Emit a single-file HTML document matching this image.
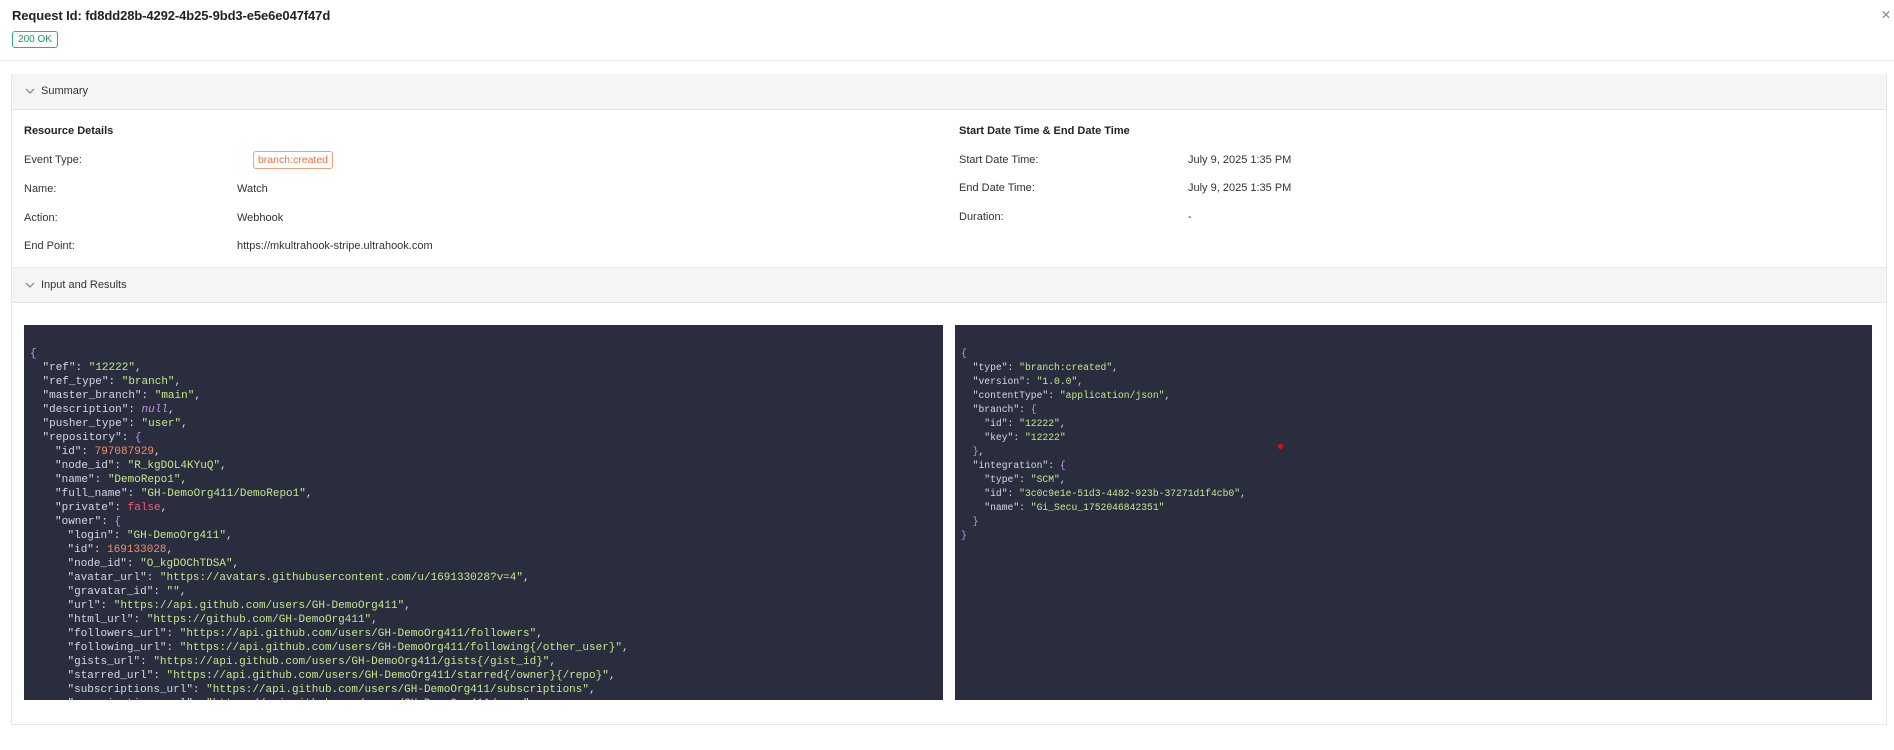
<!DOCTYPE html>
<html><head><meta charset="utf-8"><style>
*{box-sizing:border-box;margin:0;padding:0}
body{width:1894px;height:750px;background:#fff;font-family:"Liberation Sans",sans-serif;color:#222;position:relative;overflow:hidden;font-size:11px}
.abs{position:absolute;white-space:nowrap}
.title{left:12px;top:8px;font-size:13px;color:#222;font-weight:600;letter-spacing:-0.1px}
.ok{left:12px;top:31px;width:46px;height:17px;border:1px solid #2db37a;border-radius:3px;color:#1a9a62;font-size:10px;line-height:15px;text-align:center}
.hr{left:0;top:60px;width:1894px;height:1px;background:#e8e8e8}
.x{left:1881px;top:8px;font-size:12px;color:#888}
.box{left:11px;top:74px;width:1876px;height:651px;border:1px solid #e6e6e6}
.hd{left:12px;width:1874px;height:36px;background:#f5f5f5;border-bottom:1px solid #e3e3e3}
.hd span{position:absolute;left:29px;top:11px;font-size:11px;color:#333}
.hd svg{position:absolute;left:13px;top:14px}
.h{font-weight:bold;color:#222}
.lbl{color:#333}
.badge{left:253px;top:151px;width:80px;height:18px;border:1px solid #f0a07a;border-radius:3px;color:#e8703f;text-align:center;line-height:16px;font-size:10.5px}
.code{background:#292d3e;top:325px;height:375px;overflow:hidden}
.code pre{font-family:"Liberation Mono",monospace;font-size:9.7px;line-height:14px;color:#d5d8e4;padding:22px 0 0 6px}
.lc{font-family:"Liberation Mono",monospace;font-size:11px;line-height:14px;color:#d5d8e4;padding:22px 0 0 6px}
.lc div{height:14px;white-space:pre}
.l1{padding-left:12.5px}.l2{padding-left:25px}.l3{padding-left:37.5px}
.s{color:#c3e88d}.n{color:#f78c6c}.f{color:#ff5370}.b{color:#c792ea}.i{color:#c792ea;font-style:italic}.k{color:#d5d8e4}
</style></head><body>
<div class="abs title">Request Id: fd8dd28b-4292-4b25-9bd3-e5e6e047f47d</div>
<div class="abs ok">200 OK</div>
<div class="abs x">✕</div>
<div class="abs hr"></div>
<div class="abs box"></div>
<div class="abs hd" style="top:74px"><svg width="10" height="6" viewBox="0 0 10 6"><path d="M1 1l4 4 4-4" fill="none" stroke="#777" stroke-width="1.1"/></svg><span>Summary</span></div>

<div class="abs h" style="left:24px;top:125px">Resource Details</div>
<div class="abs lbl" style="left:24px;top:154px">Event Type:</div>
<div class="abs badge">branch:created</div>
<div class="abs lbl" style="left:24px;top:183px">Name:</div>
<div class="abs lbl" style="left:237px;top:183px">Watch</div>
<div class="abs lbl" style="left:24px;top:212px">Action:</div>
<div class="abs lbl" style="left:237px;top:212px">Webhook</div>
<div class="abs lbl" style="left:24px;top:240px">End Point:</div>
<div class="abs lbl" style="left:237px;top:240px">https://mkultrahook-stripe.ultrahook.com</div>

<div class="abs h" style="left:959px;top:125px">Start Date Time &amp; End Date Time</div>
<div class="abs lbl" style="left:959px;top:154px">Start Date Time:</div>
<div class="abs lbl" style="left:1188px;top:154px">July 9, 2025 1:35 PM</div>
<div class="abs lbl" style="left:959px;top:182px">End Date Time:</div>
<div class="abs lbl" style="left:1188px;top:182px">July 9, 2025 1:35 PM</div>
<div class="abs lbl" style="left:959px;top:211px">Duration:</div>
<div class="abs lbl" style="left:1188px;top:211px">-</div>

<div class="abs hd" style="top:267px;border-top:1px solid #e8e8e8;height:36px"><svg width="10" height="6" viewBox="0 0 10 6"><path d="M1 1l4 4 4-4" fill="none" stroke="#777" stroke-width="1.1"/></svg><span>Input and Results</span></div>

<div class="abs code" style="left:24px;width:919px"><div class="lc">
<div><span class="b">{</span></div>
<div class="l1">"ref": <span class="s">"12222"</span>,</div>
<div class="l1">"ref_type": <span class="s">"branch"</span>,</div>
<div class="l1">"master_branch": <span class="s">"main"</span>,</div>
<div class="l1">"description": <span class="i">null</span>,</div>
<div class="l1">"pusher_type": <span class="s">"user"</span>,</div>
<div class="l1">"repository": <span class="b">{</span></div>
<div class="l2">"id": <span class="n">797087929</span>,</div>
<div class="l2">"node_id": <span class="s">"R_kgDOL4KYuQ"</span>,</div>
<div class="l2">"name": <span class="s">"DemoRepo1"</span>,</div>
<div class="l2">"full_name": <span class="s">"GH-DemoOrg411/DemoRepo1"</span>,</div>
<div class="l2">"private": <span class="f">false</span>,</div>
<div class="l2">"owner": <span class="b">{</span></div>
<div class="l3">"login": <span class="s">"GH-DemoOrg411"</span>,</div>
<div class="l3">"id": <span class="n">169133028</span>,</div>
<div class="l3">"node_id": <span class="s">"O_kgDOChTDSA"</span>,</div>
<div class="l3">"avatar_url": <span class="s">"https://avatars.githubusercontent.com/u/169133028?v=4"</span>,</div>
<div class="l3">"gravatar_id": <span class="s">""</span>,</div>
<div class="l3">"url": <span class="s">"https://api.github.com/users/GH-DemoOrg411"</span>,</div>
<div class="l3">"html_url": <span class="s">"https://github.com/GH-DemoOrg411"</span>,</div>
<div class="l3">"followers_url": <span class="s">"https://api.github.com/users/GH-DemoOrg411/followers"</span>,</div>
<div class="l3">"following_url": <span class="s">"https://api.github.com/users/GH-DemoOrg411/following{/other_user}"</span>,</div>
<div class="l3">"gists_url": <span class="s">"https://api.github.com/users/GH-DemoOrg411/gists{/gist_id}"</span>,</div>
<div class="l3">"starred_url": <span class="s">"https://api.github.com/users/GH-DemoOrg411/starred{/owner}{/repo}"</span>,</div>
<div class="l3">"subscriptions_url": <span class="s">"https://api.github.com/users/GH-DemoOrg411/subscriptions"</span>,</div>
<div class="l3">"organizations_url": <span class="s">"https://api.github.com/users/GH-DemoOrg411/orgs"</span>,</div>
</div></div>

<div class="abs code" style="left:955px;width:917px"><pre><span class="b">{</span>
  "type": <span class="s">"branch:created"</span>,
  "version": <span class="s">"1.0.0"</span>,
  "contentType": <span class="s">"application/json"</span>,
  "branch": <span class="b">{</span>
    "id": <span class="s">"12222"</span>,
    "key": <span class="s">"12222"</span>
  <span class="b">}</span>,
  "integration": <span class="b">{</span>
    "type": <span class="s">"SCM"</span>,
    "id": <span class="s">"3c0c9e1e-51d3-4482-923b-37271d1f4cb0"</span>,
    "name": <span class="s">"Gi_Secu_1752046842351"</span>
  <span class="b">}</span>
<span class="b">}</span></pre></div>
<div class="abs" style="left:1278px;top:444px;width:5px;height:5px;border-radius:50%;background:#e01010"></div>
</body></html>
